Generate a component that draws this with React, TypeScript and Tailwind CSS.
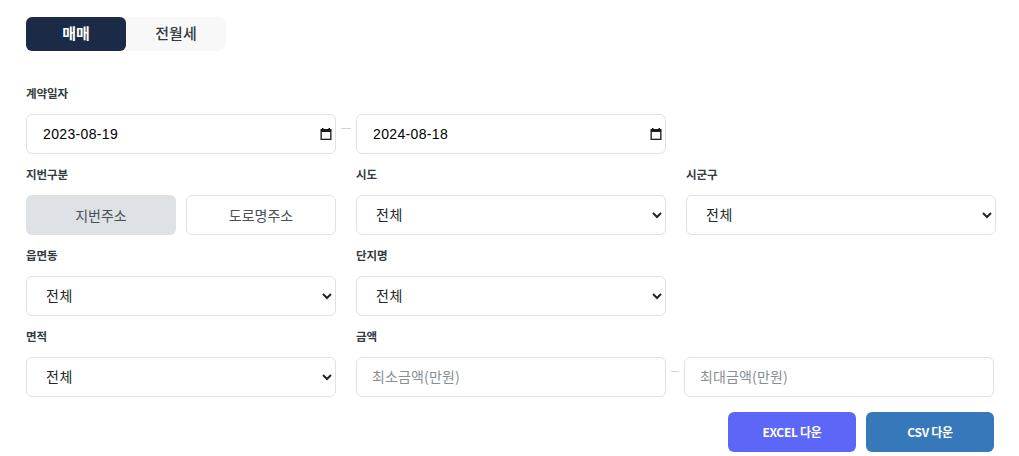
import { ReactNode } from "react"

const font = "font-['Noto_Sans_CJK_KR','Noto_Sans',sans-serif]"
const field = "h-10 rounded-md border border-[#dee2e6] bg-white px-[15px] pb-0.5 text-sm text-[#212529]"

function Label({ children }: { children: ReactNode }) {
  return <label className="mb-[14px] block h-[14px] text-[11.5px] leading-[14px] font-bold tracking-[-0.1px] text-[#343a40]">{children}</label>
}

function Dash({ className }: { className: string }) {
  return <span className={`mb-3 h-px shrink-0 bg-[#ced4da] ${className}`} />
}

function AllSelect() {
  return (
    <select className={`${field} w-full tracking-[0.5px]`} defaultValue="all">
      <option value="all">전체</option>
    </select>
  )
}

// 날짜 입력: yyyy-mm-dd 표기를 유지하려고 text input + 달력 아이콘
function DateField({ value }: { value: string }) {
  return (
    <div className="relative">
      <input
        type="text"
        readOnly
        defaultValue={value}
        className="h-10 w-full rounded-md border border-[#dee2e6] bg-white pr-8 pl-4 font-['Liberation_Sans',sans-serif] text-sm tracking-[0.35px] text-black"
      />
      <svg className="absolute top-[13px] right-[3px] h-[14px] w-[14px]" viewBox="0 0 14 14">
        <path fill="#1a1a1a" d="M3 1h1.5v1h5V1H11v1h1.5v11h-11V2H3z" />
        <path fill="#fff" d="M2.8 5h8.4v6.7H2.8z" />
      </svg>
    </div>
  )
}

export default function App() {
  return (
    <div className={`h-[456px] w-[1019px] overflow-hidden bg-white px-[26px] pt-[17px] ${font}`}>
      {/* 매매 / 전월세 */}
      <div className="flex w-[200px] rounded-lg bg-[#f8f8f9]">
        <button className="h-[34px] w-[100px] rounded-md bg-[#1b2a47] pb-px text-[15px] font-bold text-white">매매</button>
        <button className="h-[34px] w-[100px] pb-px text-[15px] font-medium text-[#343a40]">전월세</button>
      </div>

      <div className="mt-[35px] flex flex-col gap-[13px]">
        <div className="flex">
          <div className="w-[310px]">
            <Label>계약일자</Label>
            <DateField value="2023-08-19" />
          </div>
          <div className="flex w-5 items-center justify-center pt-[28px]">
            <Dash className="w-2.5" />
          </div>
          <div className="w-[310px] pt-[28px]">
            <DateField value="2024-08-18" />
          </div>
        </div>

        <div className="grid grid-cols-[310px_310px_310px] gap-x-5">
          <div>
            <Label>지번구분</Label>
            <div className="flex gap-2.5">
              <button className="h-10 w-[150px] rounded-md bg-[#dee2e6] pb-px text-sm text-[#495057]">지번주소</button>
              <button className="h-10 w-[150px] rounded-md border border-[#dee2e6] bg-white pb-px text-sm text-[#495057]">도로명주소</button>
            </div>
          </div>
          <div>
            <Label>시도</Label>
            <AllSelect />
          </div>
          <div>
            <Label>시군구</Label>
            <AllSelect />
          </div>
        </div>

        <div className="grid grid-cols-[310px_310px_310px] gap-x-5">
          <div>
            <Label>읍면동</Label>
            <AllSelect />
          </div>
          <div>
            <Label>단지명</Label>
            <AllSelect />
          </div>
        </div>

        <div className="grid grid-cols-[310px_310px_310px] gap-x-5">
          <div>
            <Label>면적</Label>
            <AllSelect />
          </div>
          <div>
            <Label>금액</Label>
            <input placeholder="최소금액(만원)" className={`${field} w-full tracking-[0.15px] placeholder:text-[#868e96]`} />
          </div>
          <div className="-ml-5 flex items-center pt-[28px]">
            <div className="flex w-[18px] shrink-0 items-center justify-center">
              <Dash className="w-2" />
            </div>
            <input placeholder="최대금액(만원)" className={`${field} w-[310px] shrink-0 tracking-[0.15px] placeholder:text-[#868e96]`} />
          </div>
        </div>
      </div>

      <div className="mt-[15px] flex w-[968px] justify-end gap-2.5">
        <button className="h-10 w-[128px] rounded-md bg-[#5c67f7] text-xs font-bold tracking-[-0.3px] text-white">EXCEL 다운</button>
        <button className="h-10 w-[128px] rounded-md bg-[#3678b9] text-xs font-bold tracking-[-0.3px] text-white">CSV 다운</button>
      </div>
    </div>
  )
}
